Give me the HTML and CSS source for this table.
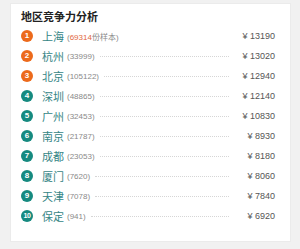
FILE: index.html
```html
<!DOCTYPE html>
<html>
<head>
  <meta charset="UTF-8">
  <title>地区竞争力分析</title>
  <link rel="stylesheet" href="styles.css">
</head>
<body>
  <div class="card">
    <h3 class="title">地区竞争力分析</h3>
    <ul class="rank-list">
      <li class="rank-row top">
        <span class="badge">1</span>
        <span class="city">上海</span>
        <span class="count">(<em>69314</em>份样本)</span>
        <span class="dots none"></span>
        <span class="price">¥ 13190</span>
      </li>
      <li class="rank-row top">
        <span class="badge">2</span>
        <span class="city">杭州</span>
        <span class="count">(33999)</span>
        <span class="dots"></span>
        <span class="price">¥ 13020</span>
      </li>
      <li class="rank-row top">
        <span class="badge">3</span>
        <span class="city">北京</span>
        <span class="count">(105122)</span>
        <span class="dots"></span>
        <span class="price">¥ 12940</span>
      </li>
      <li class="rank-row">
        <span class="badge">4</span>
        <span class="city">深圳</span>
        <span class="count">(48865)</span>
        <span class="dots"></span>
        <span class="price">¥ 12140</span>
      </li>
      <li class="rank-row">
        <span class="badge">5</span>
        <span class="city">广州</span>
        <span class="count">(32453)</span>
        <span class="dots"></span>
        <span class="price">¥ 10830</span>
      </li>
      <li class="rank-row">
        <span class="badge">6</span>
        <span class="city">南京</span>
        <span class="count">(21787)</span>
        <span class="dots"></span>
        <span class="price">¥ 8930</span>
      </li>
      <li class="rank-row">
        <span class="badge">7</span>
        <span class="city">成都</span>
        <span class="count">(23053)</span>
        <span class="dots"></span>
        <span class="price">¥ 8180</span>
      </li>
      <li class="rank-row">
        <span class="badge">8</span>
        <span class="city">厦门</span>
        <span class="count">(7620)</span>
        <span class="dots"></span>
        <span class="price">¥ 8060</span>
      </li>
      <li class="rank-row">
        <span class="badge">9</span>
        <span class="city">天津</span>
        <span class="count">(7078)</span>
        <span class="dots"></span>
        <span class="price">¥ 7840</span>
      </li>
      <li class="rank-row">
        <span class="badge small">10</span>
        <span class="city">保定</span>
        <span class="count">(941)</span>
        <span class="dots"></span>
        <span class="price">¥ 6920</span>
      </li>
    </ul>
  </div>
</body>
</html>
```

FILE: styles.css
```css
body {
  margin: 0;
  padding: 3px 9px 6px 10px;
  background-color: #f1f1f1;
  font-family: "Liberation Sans", Arial, "Noto Sans CJK SC", sans-serif;
  color: #333;
}

.card {
  background-color: #fff;
  border: 1px solid #ebebeb;
  padding: 4px 15px 15px 10px;
}

.title {
  margin: 0;
  font-size: 11px;
  line-height: 18px;
  font-weight: bold;
  color: #222;
}

.rank-list {
  list-style: none;
  margin: 0;
  padding: 0;
}

.rank-row {
  display: flex;
  align-items: center;
  height: 20px;
}

.badge {
  flex: none;
  width: 12px;
  height: 12px;
  border-radius: 50%;
  background-color: #168a80;
  color: #fff;
  font-size: 8px;
  font-weight: bold;
  line-height: 12px;
  text-align: center;
}

.badge.small {
  font-size: 7px;
  letter-spacing: -0.5px;
}

.top .badge {
  background-color: #ec6a1c;
}

.city {
  margin-left: 9px;
  font-size: 11px;
  color: #358585;
}

.count {
  margin-left: 3px;
  font-size: 8px;
  color: #8a8a8a;
}

.count em {
  font-style: normal;
  color: #e2673d;
}

.dots {
  flex: 1;
  margin: 0 8px 0 5px;
  border-top: 1px dotted #d6d6d6;
}

.dots.none {
  border-top-color: transparent;
}

.price {
  flex: none;
  width: 38px;
  text-align: right;
  font-size: 9px;
  color: #555;
}
```
